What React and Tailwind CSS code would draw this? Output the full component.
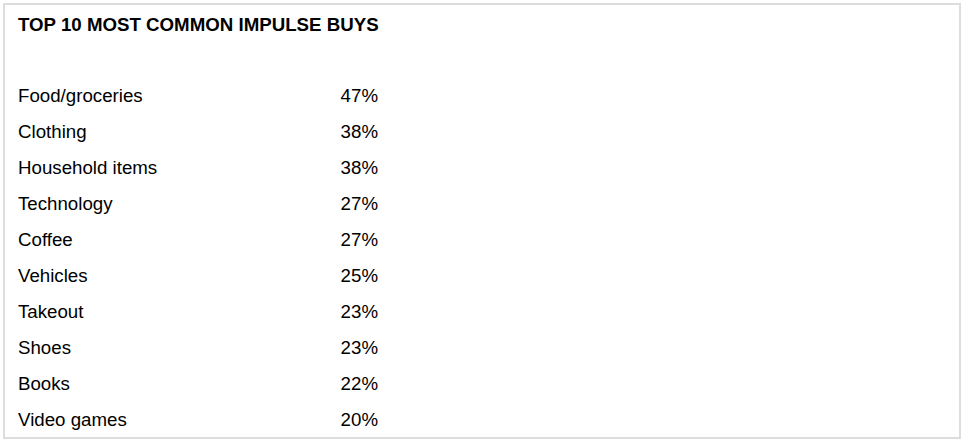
const ITEMS = [
  ['Food/groceries', '47%'],
  ['Clothing', '38%'],
  ['Household items', '38%'],
  ['Technology', '27%'],
  ['Coffee', '27%'],
  ['Vehicles', '25%'],
  ['Takeout', '23%'],
  ['Shoes', '23%'],
  ['Books', '22%'],
  ['Video games', '20%'],
];

export default function App() {
  return (
    <div className="w-[965px] h-[443px] bg-white p-[3px] font-['Liberation_Sans',Arial,sans-serif] text-black">
      <div className="w-[958px] h-[436px] border-2 border-[#dddddd] pl-[13px] pt-[9px]">
        <h1 className="text-[18.7px] font-bold leading-[22px]">TOP 10 MOST COMMON IMPULSE BUYS</h1>
        <div className="w-[360px] mt-[42px]">
          {ITEMS.map(([name, pct]) => (
            <div key={name} className="flex justify-between text-[18.7px] leading-[36px]">
              <span>{name}</span>
              <span>{pct}</span>
            </div>
          ))}
        </div>
      </div>
    </div>
  );
}
